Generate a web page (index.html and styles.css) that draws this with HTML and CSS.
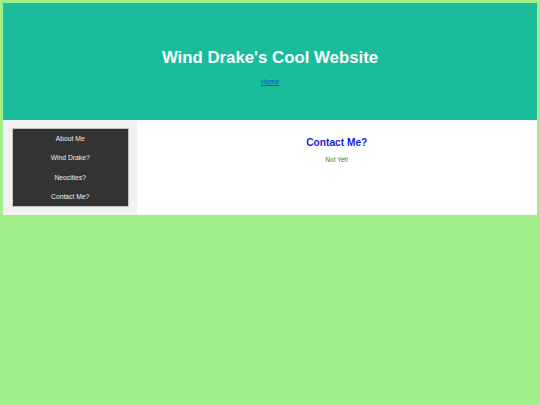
FILE: index.html
```html
<!DOCTYPE html>
<html>
<head>
<meta charset="utf-8">
<title>Wind Drake's Cool Website</title>
<link rel="stylesheet" href="styles.css">
</head>
<body>
<header class="header">
  <h1 class="site-title">Wind Drake's Cool Website</h1>
  <a class="home-link" href="#">Home</a>
</header>
<div class="row">
  <aside class="sidebar">
    <ul class="nav">
      <li class="nav-item">About Me</li>
      <li class="nav-item">Wind Drake?</li>
      <li class="nav-item">Neocities?</li>
      <li class="nav-item">Contact Me?</li>
    </ul>
  </aside>
  <main class="content">
    <h2 class="content-title">Contact Me?</h2>
    <p class="content-text">Not Yet!</p>
  </main>
</div>
</body>
</html>
```

FILE: styles.css
```css
html, body {
  margin: 0;
  padding: 0;
}
body {
  background: #a1ef8b;
  padding: 3px;
  font-family: "Liberation Sans", Arial, sans-serif;
}
.header {
  background: #1abc9c;
  height: 117px;
  box-sizing: border-box;
  padding-top: 45px;
  text-align: center;
}
.site-title {
  margin: 0;
  font-size: 16.8px;
  line-height: 20px;
  font-weight: bold;
  color: #fafffd;
}
.home-link {
  display: inline-block;
  margin-top: 9px;
  font-size: 6.75px;
  line-height: 10px;
  color: #0b50e2;
  text-decoration: underline;
}
.row {
  display: flex;
}
.sidebar {
  width: 25%;
  background: #f1f1f1;
  box-sizing: border-box;
  padding: 8px 8px 8px 9px;
}
.nav {
  list-style: none;
  margin: 0;
  padding: 0;
  background: #333333;
  border: 1px solid #c4c4c4;
}
.nav-item {
  text-align: center;
  font-size: 6.75px;
  line-height: 19.25px;
  color: #f0f0f0;
}
.content {
  width: 75%;
  background: #ffffff;
  text-align: center;
  padding-top: 17px;
}
.content-title {
  margin: 0;
  font-size: 10.2px;
  line-height: 12px;
  font-weight: bold;
  color: #1818dd;
}
.content-text {
  margin: 7px 0 0 0;
  font-size: 6.5px;
  line-height: 8px;
  color: #1f8c1f;
}
```
